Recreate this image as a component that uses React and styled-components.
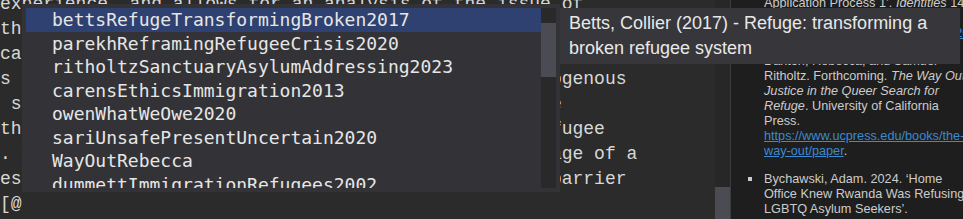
import React from 'react';
import styled, { createGlobalStyle } from 'styled-components';

const GlobalStyle = createGlobalStyle`
    html, body {
        margin: 0;
        padding: 0;
        background: #2b2b2b;
        overflow: hidden;
    }
`;

const Screen = styled.div`
    position: relative;
    display: flex;
    width: 963px;
    height: 219px;
    overflow: hidden;
`;

const Editor = styled.div`
    display: flex;
    flex: 0 0 730px;
    background-color: #2b2b2b;
`;

const Code = styled.div`
    flex: 1;
    margin-top: -8px;
    overflow: hidden;
    font-family: "Liberation Mono", monospace;
    font-size: 18px;
    color: #d8d8d8;
`;

const CodeLine = styled.div`
    height: 25px;
    line-height: 25px;
    white-space: pre;
`;

const ScrollTrack = styled.div`
    display: flex;
    flex-direction: column;
    justify-content: ${(p) => (p.$end ? 'flex-end' : 'flex-start')};
    flex: 0 0 15px;
    background-color: ${(p) => p.$bg || '#272727'};
`;

const ScrollThumb = styled.div`
    height: ${(p) => p.$size}px;
    margin-top: ${(p) => p.$offset || 0}px;
    background-color: #4b4b54;
`;

const Preview = styled.aside`
    flex: 1;
    box-sizing: border-box;
    padding-left: 17px;
    background-color: #1e1e1e;
    border-left: 1px solid #3c3c3c;
    overflow: hidden;
    font-family: "Liberation Sans", Arial, sans-serif;
    font-size: 12.7px;
    line-height: 15px;
    color: #cccccc;
`;

const RefList = styled.ul`
    list-style: none;
    margin: -19px 0 0;
    padding: 0;
`;

const RefItem = styled.li`
    display: grid;
    grid-template-columns: 4px 1fr;
    column-gap: 12px;
    margin-bottom: 13px;
`;

const Marker = styled.span`
    width: 4px;
    height: 4px;
    margin-top: 5px;
    background-color: #cccccc;
`;

const RefLine = styled.div`
    white-space: nowrap;

    em {
        font-style: italic;
    }

    a {
        color: #3a8bd0;
        text-decoration: underline;
    }
`;

const Suggest = styled.div`
    position: absolute;
    left: 22px;
    top: 4px;
    width: 538px;
    height: 188px;
    box-sizing: border-box;
    padding: 4px;
    display: flex;
    background-color: #333337;
`;

const SuggestList = styled.div`
    flex: 1;
    overflow: hidden;
`;

const SuggestRow = styled.div`
    height: 23.5px;
    line-height: 23.5px;
    padding-left: 26px;
    white-space: pre;
    font-family: "DejaVu Sans Mono", monospace;
    font-size: 18px;
    color: #e6e6e6;
    background-color: ${(p) => (p.$selected ? '#2f4170' : 'transparent')};
`;

const Hover = styled.div`
    position: absolute;
    left: 560px;
    top: 8px;
    width: 400px;
    height: 56px;
    box-sizing: border-box;
    padding: 3px 9px;
    background-color: #36363b;
    font-family: "Liberation Sans", Arial, sans-serif;
    font-size: 18px;
    line-height: 25px;
    color: #e8e8e8;
`;

const codeLines = [
    'experience, and allows for an analysis of the issue of',
    'that LGBTQ people face when claiming asylum. In many',
    "cases the Home Office's understanding of sexuality",
    's a fixed identity, and treats sexuality as one homogenous',
    ' sexual and gender minorities who seek refuge in the',
    'the ways in which the Home Office sees the queer refugee',
    '. This produces a narrow, static and Westernised image of a',
    'establishes a credibility test that functions as a barrier',
    '[@',
];

const suggestions = [
    'bettsRefugeTransformingBroken2017',
    'parekhReframingRefugeeCrisis2020',
    'ritholtzSanctuaryAsylumAddressing2023',
    'carensEthicsImmigration2013',
    'owenWhatWeOwe2020',
    'sariUnsafePresentUncertain2020',
    'WayOutRebecca',
    'dummettImmigrationRefugees2002',
];

function App() {
    return (
        <>
            <GlobalStyle />
            <Screen>
                <Editor>
                    <Code>
                        {codeLines.map((line, i) => (
                            <CodeLine key={i}>{line}</CodeLine>
                        ))}
                    </Code>
                    <ScrollTrack $end>
                        <ScrollThumb $size={32} />
                    </ScrollTrack>
                </Editor>

                <Preview>
                    <RefList>
                        <RefItem>
                            <Marker />
                            <div>
                                <RefLine>Birdsong, Mia. 2023. ‘Queer Asylum Seekers and the</RefLine>
                                <RefLine>Application Process 1’. <em>Identities</em> 14 (3): 210–28.</RefLine>
                                <RefLine>(3): 210–28.</RefLine>
                                <RefLine><a>https://doi.org/10.1080/1070289X.2023.2209541</a></RefLine>
                            </div>
                        </RefItem>
                        <RefItem>
                            <Marker />
                            <div>
                                <RefLine>Danton, Rebecca, and Samuel</RefLine>
                                <RefLine>Ritholtz. Forthcoming. <em>The Way Out:</em></RefLine>
                                <RefLine><em>Justice in the Queer Search for</em></RefLine>
                                <RefLine><em>Refuge</em>. University of California</RefLine>
                                <RefLine>Press.</RefLine>
                                <RefLine><a>https://www.ucpress.edu/books/the-</a></RefLine>
                                <RefLine><a>way-out/paper</a>.</RefLine>
                            </div>
                        </RefItem>
                        <RefItem>
                            <Marker />
                            <div>
                                <RefLine>Bychawski, Adam. 2024. ‘Home</RefLine>
                                <RefLine>Office Knew Rwanda Was Refusing</RefLine>
                                <RefLine>LGBTQ Asylum Seekers’.</RefLine>
                            </div>
                        </RefItem>
                    </RefList>
                </Preview>

                <Suggest>
                    <SuggestList>
                        {suggestions.map((key, i) => (
                            <SuggestRow key={key} $selected={i === 0}>{key}</SuggestRow>
                        ))}
                    </SuggestList>
                    <ScrollTrack $bg="#292929">
                        <ScrollThumb $size={54} $offset={15} />
                    </ScrollTrack>
                </Suggest>

                <Hover>
                    Betts, Collier (2017) - Refuge: transforming a
                    <br />
                    broken refugee system
                </Hover>
            </Screen>
        </>
    );
}

export default App;
